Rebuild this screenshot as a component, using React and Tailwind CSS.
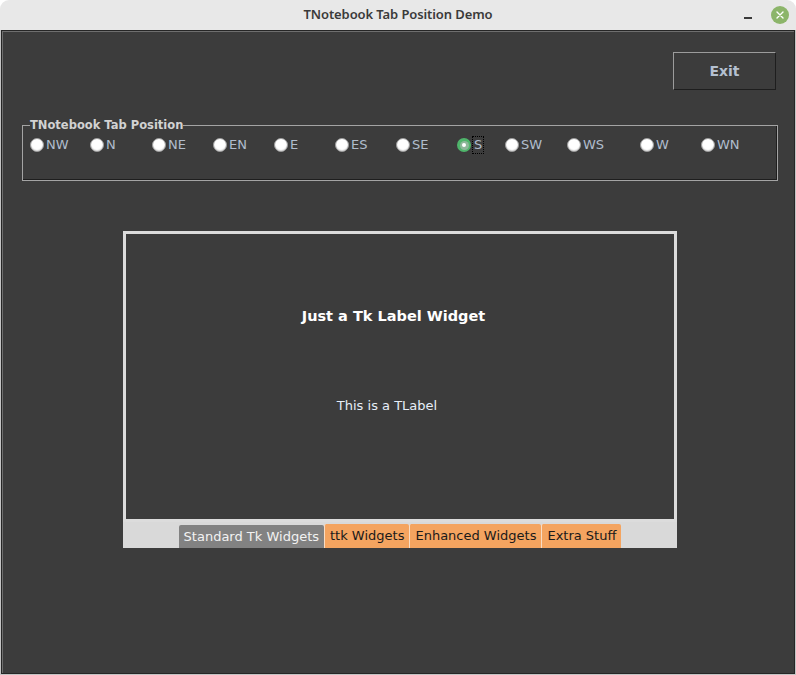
import React from "react";

const radios = [
  { t: "NW", w: 60 },
  { t: "N", w: 62 },
  { t: "NE", w: 61 },
  { t: "EN", w: 61 },
  { t: "E", w: 61 },
  { t: "ES", w: 61 },
  { t: "SE", w: 61 },
  { t: "S", w: 48, sel: true },
  { t: "SW", w: 62 },
  { t: "WS", w: 73 },
  { t: "W", w: 61 },
  { t: "WN", w: 40 },
];

function Radio({ t, w, sel }) {
  return (
    <div className="flex items-center h-[18px]" style={{ width: w }}>
      {sel ? (
        <div className="w-[14px] h-[14px] rounded-full bg-[#4fb56b] flex items-center justify-center shrink-0">
          <div className="w-[9px] h-[9px] rounded-full bg-[#8fb79a] flex items-center justify-center">
            <div className="w-[4px] h-[4px] rounded-full bg-white" />
          </div>
        </div>
      ) : (
        <div className="w-[14px] h-[14px] rounded-full bg-white border border-[#9a9a9a] shadow-[inset_0_-1px_1px_rgba(0,0,0,0.15)] shrink-0" />
      )}
      {sel ? (
        <span className="ml-[1px] px-[1px] border border-dotted border-black text-[13px] leading-[16px] text-[#b0bccc]">
          {t}
        </span>
      ) : (
        <span className="ml-[2px] text-[13px] leading-[16px] text-[#b0bccc]">{t}</span>
      )}
    </div>
  );
}

export default function App() {
  return (
    <div
      className="w-[796px] h-[675px] flex flex-col bg-white overflow-hidden"
      style={{ fontFamily: '"DejaVu Sans", sans-serif' }}
    >
      {/* title bar */}
      <div className="h-[30px] shrink-0 bg-[#e8e8e8] rounded-t-[9px] flex items-center relative">
        <div
          className="flex-1 text-center text-[13px] font-semibold text-[#3a3a3a] tracking-[-0.1px]"
          style={{ fontFamily: '"Noto Sans", "Open Sans", sans-serif' }}
        >
          TNotebook Tab Position Demo
        </div>
        <div className="absolute right-[7px] top-[6px] flex items-center gap-[19px]">
          <div className="w-[8px] h-[1.5px] bg-[#3a3a3a] mt-[6px]" />
          <div className="w-[18px] h-[18px] rounded-full bg-[#8cb56a] flex items-center justify-center">
            <svg width="10" height="10" viewBox="0 0 10 10">
              <path d="M2 2L8 8M8 2L2 8" stroke="white" strokeWidth="1.4" strokeLinecap="round" />
            </svg>
          </div>
        </div>
      </div>

      {/* body */}
      <div className="flex-1 flex flex-col border-x border-b border-[#c4c4c4]">
        <div className="flex-1 flex flex-col border border-[#262626]">
          <div className="flex-1 flex flex-col bg-[#3c3c3c] border-l border-t border-[#6e6e6e]">
            {/* Exit */}
            <div className="flex justify-end pr-[18px] pt-[20px]">
              <div className="w-[103px] h-[38px] border border-t-[#9c9c9c] border-l-[#9c9c9c] border-r-[#1e1e1e] border-b-[#1e1e1e] flex items-center justify-center">
                <span className="text-[14px] font-bold text-[#b4c0d0]">Exit</span>
              </div>
            </div>

            {/* labelframe */}
            <fieldset className="mt-[28px] ml-[19px] mr-[16px] h-[63px] border border-[#a4a4a4] shadow-[inset_-1px_-1px_0_#1e1e1e] pl-[7px]">
              <legend className="ml-0 px-0 text-[11.5px] font-bold leading-[15px] text-[#d2d2d2]">
                TNotebook Tab Position
              </legend>
              <div className="flex items-center mt-[3px]">
                {radios.map((r) => (
                  <Radio key={r.t} {...r} />
                ))}
              </div>
            </fieldset>

            {/* notebook */}
            <div className="mt-[50px] ml-[120px] w-[554px] flex flex-col">
              <div className="h-[291px] border-[3px] border-[#dcdcdc] bg-[#3c3c3c] flex flex-col items-center">
                <div className="mt-[72px] mr-[13px] text-[14.5px] font-bold text-white">Just a Tk Label Widget</div>
                <div className="mt-[68px] mr-[26px] text-[13px] text-[#e6eef8]">This is a TLabel</div>
              </div>
              <div className="h-[26px] bg-[#d9d9d9] flex justify-center items-end">
                <div className="h-[23px] px-[5px] bg-[#828282] rounded-t-[2px] flex items-center text-[13px] text-[#f2f2f2]">
                  Standard Tk Widgets
                </div>
                <div className="h-[24px] px-[5px] bg-[#f4a460] rounded-t-[2px] border-l border-[#f8dcc4] flex items-center text-[13px] text-[#1a1a1a]">
                  ttk Widgets
                </div>
                <div className="h-[24px] px-[5px] bg-[#f4a460] rounded-t-[2px] border-l border-[#f8dcc4] flex items-center text-[13px] text-[#1a1a1a]">
                  Enhanced Widgets
                </div>
                <div className="h-[24px] px-[5px] bg-[#f4a460] rounded-t-[2px] border-l border-[#f8dcc4] flex items-center text-[13px] text-[#1a1a1a]">
                  Extra Stuff
                </div>
              </div>
            </div>
          </div>
        </div>
      </div>
    </div>
  );
}
